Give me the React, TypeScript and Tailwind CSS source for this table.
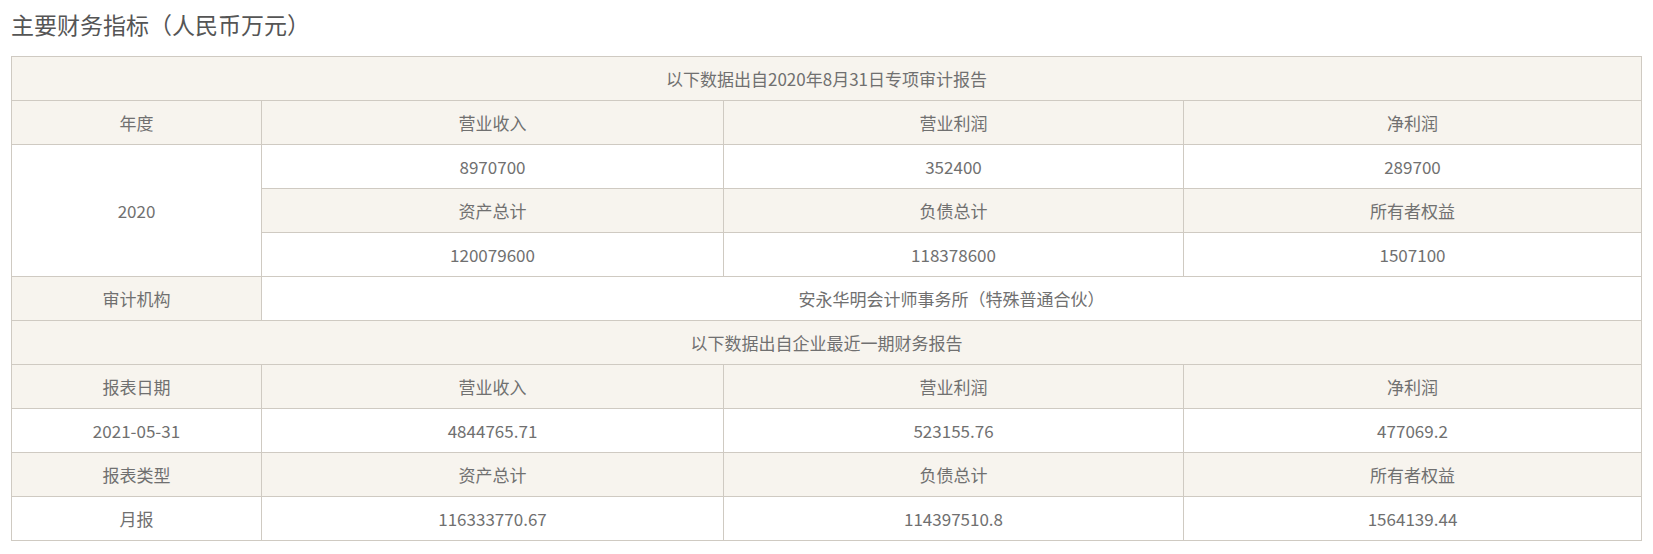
import React from 'react';

const font = "font-['Microsoft_YaHei','Noto_Sans_CJK_SC',sans-serif]";

const head = 'bg-[#f7f4ee]';
const cell = 'border border-[#cfcac2] h-[44px] text-center text-[17px] text-[#707070] font-normal p-0';

export default function App() {
  return (
    <div className={`${font} bg-white px-[11px] pt-[2px] pb-[14px]`}>
      <h2 className="text-[23px] leading-[44px] text-[#555] font-normal mb-[10px]">主要财务指标（人民币万元）</h2>
      <table className="w-full border-collapse table-fixed">
        <colgroup>
          <col className="w-[250px]" />
          <col className="w-[462px]" />
          <col className="w-[460px]" />
          <col />
        </colgroup>
        <tbody>
          <tr>
            <td colSpan={4} className={`${cell} ${head}`}>以下数据出自2020年8月31日专项审计报告</td>
          </tr>
          <tr className={head}>
            <td className={cell}>年度</td>
            <td className={cell}>营业收入</td>
            <td className={cell}>营业利润</td>
            <td className={cell}>净利润</td>
          </tr>
          <tr>
            <td rowSpan={3} className={cell}>2020</td>
            <td className={cell}>8970700</td>
            <td className={cell}>352400</td>
            <td className={cell}>289700</td>
          </tr>
          <tr className={head}>
            <td className={cell}>资产总计</td>
            <td className={cell}>负债总计</td>
            <td className={cell}>所有者权益</td>
          </tr>
          <tr>
            <td className={cell}>120079600</td>
            <td className={cell}>118378600</td>
            <td className={cell}>1507100</td>
          </tr>
          <tr>
            <td className={`${cell} ${head}`}>审计机构</td>
            <td colSpan={3} className={cell}>安永华明会计师事务所（特殊普通合伙）</td>
          </tr>
          <tr>
            <td colSpan={4} className={`${cell} ${head}`}>以下数据出自企业最近一期财务报告</td>
          </tr>
          <tr className={head}>
            <td className={cell}>报表日期</td>
            <td className={cell}>营业收入</td>
            <td className={cell}>营业利润</td>
            <td className={cell}>净利润</td>
          </tr>
          <tr>
            <td className={cell}>2021-05-31</td>
            <td className={cell}>4844765.71</td>
            <td className={cell}>523155.76</td>
            <td className={cell}>477069.2</td>
          </tr>
          <tr className={head}>
            <td className={cell}>报表类型</td>
            <td className={cell}>资产总计</td>
            <td className={cell}>负债总计</td>
            <td className={cell}>所有者权益</td>
          </tr>
          <tr>
            <td className={`${cell} bg-white`}>月报</td>
            <td className={cell}>116333770.67</td>
            <td className={cell}>114397510.8</td>
            <td className={cell}>1564139.44</td>
          </tr>
        </tbody>
      </table>
    </div>
  );
}
